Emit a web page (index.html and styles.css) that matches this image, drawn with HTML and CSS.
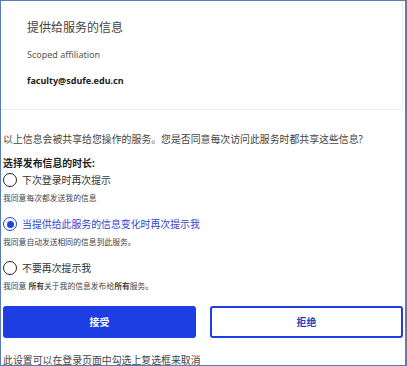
FILE: index.html
```html
<!DOCTYPE html>
<html>
<head>
  <title>信息发布同意</title>
  <link rel="stylesheet" href="styles.css">
</head>
<body>
  <div class="frame">

    <div class="card">
      <h3>提供给服务的信息</h3>
      <p class="attr-name">Scoped affiliation</p>
      <p class="attr-value">faculty@sdufe.edu.cn</p>
    </div>

    <div class="consent">
      <p class="question">以上信息会被共享给您操作的服务。您是否同意每次访问此服务时都共享这些信息?</p>
      <p class="choose">选择发布信息的时长:</p>

      <label class="option">
        <span class="radio"></span>
        <span>下次登录时再次提示</span>
      </label>
      <p class="note">我同意每次都发送我的信息</p>

      <label class="option checked">
        <span class="radio"></span>
        <span>当提供给此服务的信息变化时再次提示我</span>
      </label>
      <p class="note">我同意自动发送相同的信息到此服务。</p>

      <label class="option">
        <span class="radio"></span>
        <span>不要再次提示我</span>
      </label>
      <p class="note">我同意 <b>所有</b>关于我的信息发布给<b>所有</b>服务。</p>

      <div class="buttons">
        <button class="accept">接受</button>
        <button class="reject">拒绝</button>
      </div>

      <p class="footer">此设置可以在登录页面中勾选上复选框来取消</p>
    </div>

  </div>
</body>
</html>
```

FILE: styles.css
```css
body {
  margin: 0;
  font-family: "Noto Sans", "Noto Sans CJK SC", sans-serif;
  color: #333;
  background: white;
}

p {
  margin: 0;
}

.frame {
  box-sizing: border-box;
  width: 407px;
  height: 366px;
  border: 1px solid #5b7db5;
  border-right-width: 2px;
  overflow: hidden;
}

/* attribute card */
.card {
  box-sizing: border-box;
  height: 109px;
  padding: 19px 26px 0;
  margin-right: 2px;
  border-bottom: 1px solid #ececec;
  border-right: 1px solid #ececec;
}

.card h3 {
  margin: 0;
  font-size: 12px;
  line-height: 16px;
  font-weight: normal;
  color: #444;
}

.attr-name {
  margin-top: 13px;
  font-size: 9px;
  line-height: 12px;
  color: #555;
}

.attr-value {
  margin-top: 14px;
  font-size: 9px;
  line-height: 12px;
  font-weight: bold;
  color: #222;
}

/* consent choices */
.consent {
  padding: 0 2px;
}

.question {
  margin-top: 22px;
  font-size: 9.9px;
  line-height: 14px;
  color: #444;
}

.choose {
  margin-top: 10px;
  font-size: 9.9px;
  line-height: 14px;
  font-weight: bold;
  color: #222;
}

.option {
  display: flex;
  align-items: center;
  gap: 5px;
  height: 16px;
  margin-top: 2px;
  font-size: 9.9px;
  color: #333;
}

.radio {
  box-sizing: border-box;
  width: 14px;
  height: 14px;
  border: 1.5px solid #222;
  border-radius: 50%;
  display: flex;
  align-items: center;
  justify-content: center;
}

.option.checked {
  color: #3046d0;
  margin-top: 13px;
}

.option.checked .radio {
  border-color: #2342e0;
}

.option.checked .radio::after {
  content: "";
  width: 7px;
  height: 7px;
  border-radius: 50%;
  background: #2342e0;
}

.note {
  margin-top: 5px;
  font-size: 7.8px;
  line-height: 10px;
  color: #444;
}

.note + .option {
  margin-top: 13px;
}

.buttons {
  display: flex;
  gap: 14px;
  margin-top: 15px;
}

.buttons button {
  box-sizing: border-box;
  width: 193px;
  height: 32px;
  border-radius: 3px;
  font-family: inherit;
  font-size: 9.9px;
  font-weight: bold;
  cursor: pointer;
}

.accept {
  background: #1c3ee2;
  border: none;
  color: white;
}

.reject {
  background: white;
  border: 2px solid #1c3ee2;
  color: #2a3fc0;
}

.footer {
  margin-top: 15px;
  font-size: 9.9px;
  line-height: 14px;
  color: #444;
}
```
